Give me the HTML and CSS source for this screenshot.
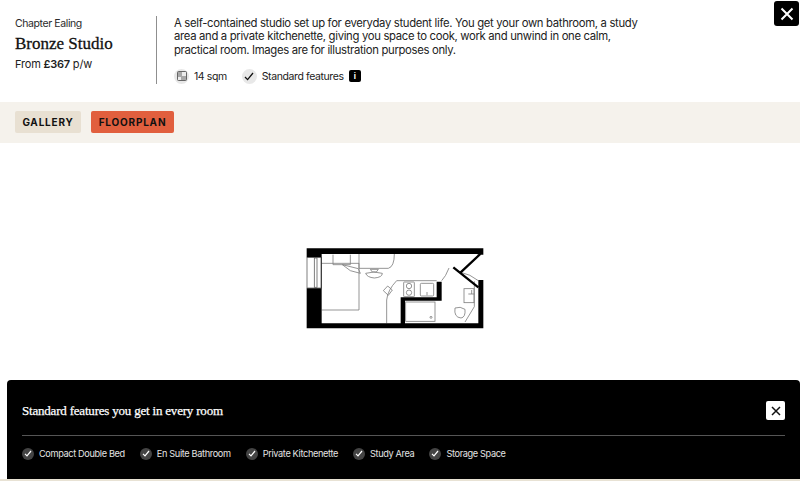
FILE: index.html
```html
<!DOCTYPE html>
<html lang="en">
<head>
  <meta charset="UTF-8" />
  <meta name="viewport" content="width=device-width, initial-scale=1" />
  <title>Bronze Studio</title>
  <link rel="stylesheet" href="styles.css">
</head>
<body>

<div class="modal">
  <button class="close-main" aria-label="Close">
    <svg width="14" height="14" viewBox="0 0 14 14"><path d="M1.5 1.5l11 11M12.5 1.5l-11 11" stroke="#fff" stroke-width="2" fill="none"/></svg>
  </button>

  <header class="top">
    <div class="intro">
      <p class="site">Chapter Ealing</p>
      <h1>Bronze Studio</h1>
      <p class="price">From <b>£367</b> p/w</p>
    </div>
    <div class="details">
      <p class="desc">A self-contained studio set up for everyday student life. You get your own bathroom, a study area and a private kitchenette, giving you space to cook, work and unwind in one calm, practical room. Images are for illustration purposes only.</p>
      <div class="facts">
        <span class="fact">
          <span class="dot">
            <svg width="10" height="10" viewBox="0 0 10 10"><rect x="0.5" y="0.5" width="9" height="9" rx="1" fill="#a8a8a8" stroke="#666"/><path d="M5 5h4V1H5zM1 9h3V6H1z" fill="#ececec"/></svg>
          </span>
          14 sqm
        </span>
        <span class="fact">
          <span class="dot">
            <svg width="10" height="9" viewBox="0 0 10 9"><path d="M1 5l2.6 2.6L9 1" stroke="#111" stroke-width="1.3" fill="none"/></svg>
          </span>
          Standard features
          <span class="info">i</span>
        </span>
      </div>
    </div>
  </header>

  <nav class="tabs">
    <button class="tab">GALLERY</button>
    <button class="tab active">FLOORPLAN</button>
  </nav>

  <main class="plan">
    <svg class="plan-svg" width="200" height="95" viewBox="0 0 600 285">
      <!-- fittings -->
      <g fill="none" stroke="#808080" stroke-width="2.5">
        <path d="M80 70H192V210H80"/>
        <path d="M114 44V74H166V44"/>
        <path d="M142 74L190 86L196 100L166 92Z"/>
        <path d="M192 42V85H280Q298 80 298 42"/>
        <path d="M212 100Q236 92 262 100Q262 112 238 114Q216 112 212 100Z"/>
        <path d="M226 88H250L244 96H232Z"/>
        <path d="M275 250V180Q278 150 305 122H425"/>
        <path d="M265 152L278 138L292 150L280 166Z"/>
        <rect x="326" y="126" width="32" height="44" rx="2"/>
        <circle cx="342" cy="138" r="8"/>
        <circle cx="342" cy="158" r="8"/>
        <rect x="376" y="130" width="40" height="38" rx="3"/>
        <path d="M396 156v10"/>
        <rect x="332" y="186" width="88" height="58"/>
        <circle cx="408" cy="232" r="3"/>
        <path d="M440 122Q452 110 462 84"/>
        <rect x="507" y="146" width="30" height="42"/>
        <path d="M520 162h18M530 150v12"/>
        <path d="M538 124V200L510 246"/>
        <path d="M480 204Q476 232 498 234Q512 232 510 208Q496 198 480 204Z"/>
        <path d="M497 97Q525 102 550 122"/>
      </g>
      <!-- window -->
      <g fill="none" stroke="#666" stroke-width="2.5">
        <rect x="36" y="52" width="42" height="92"/>
        <rect x="58" y="54" width="8" height="88"/>
      </g>
      <!-- walls -->
      <path d="M35 25H565V44H553L545 42H80V250H317V172H425V125H440V182H330V250H550V120H565V265H35V145H78V52H35Z" fill="#000"/>
      <path d="M475 82L550 142M497 97L556 42" stroke="#000" stroke-width="7" fill="none"/>
    </svg>
  </main>

  <div class="foot"></div>

  <aside class="features">
    <div class="features-head">
      <h2>Standard features you get in every room</h2>
      <button class="close-small" aria-label="Close">
        <svg width="10" height="10" viewBox="0 0 10 10"><path d="M1 1l8 8M9 1l-8 8" stroke="#111" stroke-width="1.5" fill="none"/></svg>
      </button>
    </div>
    <ul class="feature-list">
      <li><span class="tick"><svg width="8" height="7" viewBox="0 0 8 7"><path d="M1 3.8l2 2L7 1" stroke="#fff" stroke-width="1.2" fill="none"/></svg></span>Compact Double Bed</li>
      <li><span class="tick"><svg width="8" height="7" viewBox="0 0 8 7"><path d="M1 3.8l2 2L7 1" stroke="#fff" stroke-width="1.2" fill="none"/></svg></span>En Suite Bathroom</li>
      <li><span class="tick"><svg width="8" height="7" viewBox="0 0 8 7"><path d="M1 3.8l2 2L7 1" stroke="#fff" stroke-width="1.2" fill="none"/></svg></span>Private Kitchenette</li>
      <li><span class="tick"><svg width="8" height="7" viewBox="0 0 8 7"><path d="M1 3.8l2 2L7 1" stroke="#fff" stroke-width="1.2" fill="none"/></svg></span>Study Area</li>
      <li><span class="tick"><svg width="8" height="7" viewBox="0 0 8 7"><path d="M1 3.8l2 2L7 1" stroke="#fff" stroke-width="1.2" fill="none"/></svg></span>Storage Space</li>
    </ul>
  </aside>
</div>

</body>
</html>
```

FILE: styles.css
```css
* {
  margin: 0;
  padding: 0;
  box-sizing: border-box;
}

html, body {
  height: 100%;
  overflow: hidden;
}

body {
  font-family: 'Inter', sans-serif;
  background-color: #ffffff;
  color: #1a1a1a;
}

button {
  border: none;
  cursor: pointer;
  font-family: inherit;
}

.modal {
  position: relative;
  height: 481px;
  display: flex;
  flex-direction: column;
}

.close-main {
  position: absolute;
  top: 1px;
  right: 1px;
  width: 25px;
  height: 25px;
  background: #000;
  border-radius: 3px;
  display: flex;
  align-items: center;
  justify-content: center;
}

.top {
  height: 102px;
  display: flex;
  padding: 16px 0 0 15px;
}

.intro {
  width: 141px;
  height: 68px;
}

.site {
  font-size: 10.5px;
  letter-spacing: -0.4px;
  line-height: 14px;
  margin-top: 1px;
  color: #2a2a2a;
}

h1 {
  font-family: 'Liberation Serif', serif;
  font-weight: 400;
  font-size: 17px;
  line-height: 20px;
  margin-top: 3px;
  color: #111;
  -webkit-text-stroke: 0.3px #111;
}

.price {
  font-size: 11px;
  letter-spacing: -0.2px;
  line-height: 14px;
  margin-top: 3px;
  color: #222;
}

.price b {
  font-weight: 600;
}

.details {
  width: 482px;
  height: 68px;
  border-left: 1px solid #8f8f8f;
  padding-left: 17px;
}

.desc {
  font-size: 11.3px;
  letter-spacing: -0.32px;
  line-height: 13.4px;
  width: 470px;
  padding-top: 1px;
  color: #222;
}

.facts {
  display: flex;
  gap: 15px;
  margin-top: 11px;
}

.fact {
  display: flex;
  align-items: center;
  gap: 5px;
  font-size: 10.5px;
  letter-spacing: -0.4px;
  height: 16px;
  color: #222;
}

.dot {
  width: 15px;
  height: 15px;
  border-radius: 50%;
  background: #e8e8e8;
  display: flex;
  align-items: center;
  justify-content: center;
}

.info {
  width: 12px;
  height: 12px;
  background: #000;
  color: #fff;
  border-radius: 2px;
  font-size: 8px;
  font-weight: 700;
  display: flex;
  align-items: center;
  justify-content: center;
}

.tabs {
  height: 41px;
  background-color: #f5f2ec;
  display: flex;
  align-items: center;
  gap: 10px;
  padding: 0 15px 1px;
}

.tab {
  height: 22px;
  width: 66px;
  border-radius: 2px;
  background: #e8e0d2;
  color: #111;
  font-size: 10px;
  font-weight: 700;
  letter-spacing: 0.8px;
}

.tab.active {
  width: 83px;
  background: #e15f3e;
}

.plan {
  flex: 1;
  position: relative;
}

.plan-svg {
  position: absolute;
  left: 295px;
  top: 97px;
}

.foot {
  height: 2px;
  background: #e8e2d4;
}

.features {
  position: absolute;
  left: 7px;
  right: 0;
  top: 380px;
  height: 99px;
  background: #000;
  border-radius: 4px 4px 0 0;
  padding: 0 15px;
  color: #fff;
}

.features-head {
  height: 56px;
  display: flex;
  align-items: center;
  justify-content: space-between;
  border-bottom: 1px solid #555;
  padding-top: 6px;
}

h2 {
  font-family: 'Liberation Serif', serif;
  font-weight: 400;
  font-size: 13px;
  letter-spacing: -0.2px;
  -webkit-text-stroke: 0.25px #fff;
}

.close-small {
  width: 19px;
  height: 19px;
  background: #fff;
  border-radius: 2px;
  display: flex;
  align-items: center;
  justify-content: center;
}

.feature-list {
  list-style: none;
  display: flex;
  gap: 15px;
  margin-top: 11px;
}

.feature-list li {
  display: flex;
  align-items: center;
  gap: 5px;
  font-size: 9.2px;
  letter-spacing: -0.36px;
  line-height: 13px;
  color: #e4e4e4;
}

.tick {
  width: 12px;
  height: 12px;
  border-radius: 50%;
  background: #444;
  display: flex;
  align-items: center;
  justify-content: center;
}
```
